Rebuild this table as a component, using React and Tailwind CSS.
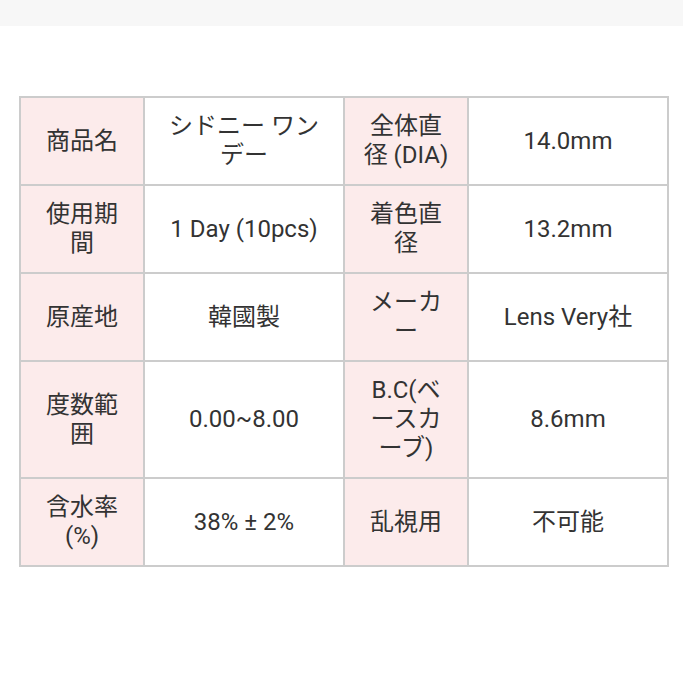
const rows = [
  ["商品名", "シドニー ワンデー", "全体直径 (DIA)", "14.0mm"],
  ["使用期間", "1 Day (10pcs)", "着色直径", "13.2mm"],
  ["原産地", "韓國製", "メーカー", "Lens Very社"],
  ["度数範囲", "0.00~8.00", "B.C(ベースカーブ)", "8.6mm"],
  ["含水率(%)", "38% ± 2%", "乱視用", "不可能"],
];

const App = () => {
  return (
    <div className="min-h-[683px] bg-white text-[#333333] font-['Roboto','Noto_Sans_CJK_JP',sans-serif]">
      <div className="h-[26px] bg-[#f7f7f7]"></div>
      <div className="pt-[70px] pl-[19px]">
        <table className="w-[650px] table-fixed border-collapse border-2 border-[#cccccc] text-[24px] leading-[29px]">
          <colgroup>
            <col className="w-[124px]" />
            <col className="w-[200px]" />
            <col className="w-[124px]" />
            <col />
          </colgroup>
          <tbody>
            {rows.map((row, i) => (
              <tr key={i}>
                {row.map((cell, j) => (
                  <td
                    key={j}
                    className={`border-2 border-[#cccccc] px-4 py-[14px] text-center align-middle ${
                      j % 2 === 0 ? "bg-[#fcebeb]" : "bg-white"
                    }`}
                  >
                    {cell}
                  </td>
                ))}
              </tr>
            ))}
          </tbody>
        </table>
      </div>
    </div>
  );
};

export default App;
